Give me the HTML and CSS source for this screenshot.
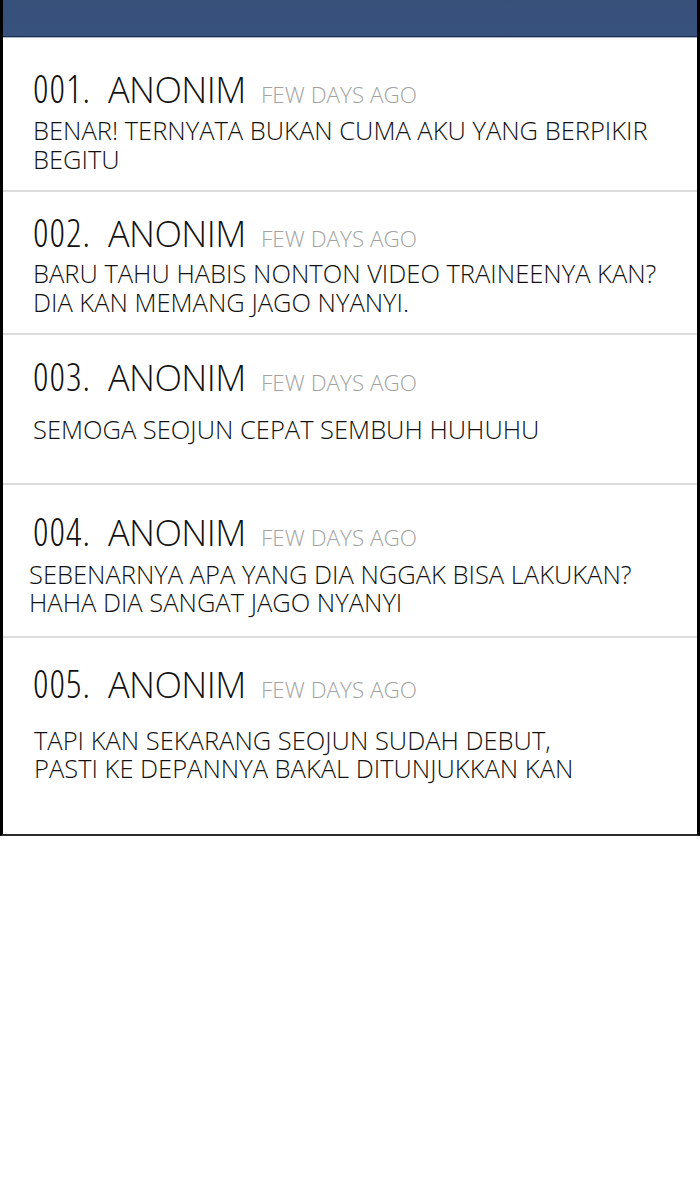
FILE: index.html
```html
<!DOCTYPE html>
<html lang="id"><head><meta charset="utf-8"><title>Komentar</title><link rel="stylesheet" href="styles.css"></head>
<body>
<div class="panel">
  <div class="header"></div>
  <ul class="comments">
    <li class="comment c1">
      <div class="title"><span class="num">001.</span><span class="name">ANONIM</span><span class="time">FEW DAYS AGO</span></div>
      <p class="text">BENAR! TERNYATA BUKAN CUMA AKU YANG BERPIKIR<br>BEGITU</p>
    </li>
    <li class="comment c2">
      <div class="title"><span class="num">002.</span><span class="name">ANONIM</span><span class="time">FEW DAYS AGO</span></div>
      <p class="text">BARU TAHU HABIS NONTON VIDEO TRAINEENYA KAN?<br>DIA KAN MEMANG JAGO NYANYI.</p>
    </li>
    <li class="comment c3">
      <div class="title"><span class="num">003.</span><span class="name">ANONIM</span><span class="time">FEW DAYS AGO</span></div>
      <p class="text">SEMOGA SEOJUN CEPAT SEMBUH HUHUHU</p>
    </li>
    <li class="comment c4">
      <div class="title"><span class="num">004.</span><span class="name">ANONIM</span><span class="time">FEW DAYS AGO</span></div>
      <p class="text">SEBENARNYA APA YANG DIA NGGAK BISA LAKUKAN?<br>HAHA DIA SANGAT JAGO NYANYI</p>
    </li>
    <li class="comment c5">
      <div class="title"><span class="num">005.</span><span class="name">ANONIM</span><span class="time">FEW DAYS AGO</span></div>
      <p class="text">TAPI KAN SEKARANG SEOJUN SUDAH DEBUT,<br>PASTI KE DEPANNYA BAKAL DITUNJUKKAN KAN</p>
    </li>
  </ul>
</div>
</body></html>
```
FILE: styles.css
```css
html, body { margin: 0; padding: 0; background: #fff; }
body { font-family: "Open Sans", "Liberation Sans", sans-serif; color: #111; }

.panel {
  width: 700px;
  box-sizing: border-box;
  border-left: 3px solid #000;
  border-right: 3px solid #000;
  border-bottom: 2px solid #2a2a2a;
}

.header {
  height: 36px;
  background: linear-gradient(#36507a, #37527c);
  border-bottom: 1px solid #1c2f52;
  box-shadow: 0 1px 0 #a6b6cf;
  margin-bottom: 1px;
}

.comments { list-style: none; margin: 0; padding: 0; }

.comment {
  border-bottom: 2px solid #dcdcdc;
  padding-left: 30px;
}
.comment:last-child { border-bottom: none; }

.title {
  display: flex;
  align-items: baseline;
  height: 40px;
  line-height: 40px;
  white-space: nowrap;
}
.num { width: 75px; flex: none; font-size: 38px; font-weight: 350; font-stretch: 75%; letter-spacing: 1px; color: #111; }
.name { width: 153px; flex: none; font-size: 36px; font-weight: 350; font-stretch: 100%; letter-spacing: -0.6px; color: #111; }
.time { font-size: 22.5px; font-weight: 350; font-stretch: 100%; color: #a2a2a2; }

.text {
  margin: 0;
  font-size: 25.5px;
  line-height: 28.5px;
  font-weight: 350;
  white-space: nowrap;
  color: #111;
}

.c1 { padding-top: 30px; padding-bottom: 17px; }
.c1 .text { margin-top: 8px; }
.c2 { padding-top: 20px; padding-bottom: 17px; }
.c2 .text { margin-top: 7px; }
.c3 { padding-top: 21px; padding-bottom: 39px; }
.c3 .text { margin-top: 19px; }
.c4 { padding-top: 26px; padding-bottom: 19px; }
.c4 .text { margin-top: 9px; margin-left: -4px; }
.c5 { padding-top: 25px; padding-bottom: 51px; }
.c5 .text { margin-top: 23px; margin-left: 1px; }
```
